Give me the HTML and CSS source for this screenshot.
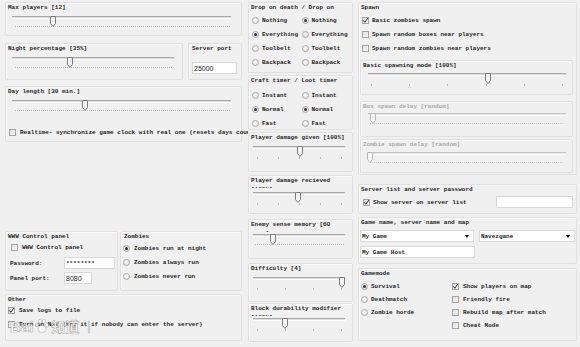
FILE: index.html
```html
<!DOCTYPE html>
<html>
<head>
<meta charset="utf-8">
<link rel="stylesheet" href="styles.css">
</head>
<body>
<div class="app">
  <!-- LEFT COLUMN -->
  <div class="col col-l">
    <div class="gb gb-l gb-max">
      <div class="gt">Max players [12]</div>
      <div class="tb tb-l m2">
        <div class="tb-line"></div>
        <div class="tb-dots"></div>
        <svg class="thumb" style="left:42px" width="6" height="11" viewBox="0 0 6 11"><path d="M0.5 0.5H5.5V7.5L3 10.5L0.5 7.5Z"/></svg>
      </div>
    </div>
    <div class="row-np">
      <div class="gb gb-l gb-night">
        <div class="gt">Night percentage [35%]</div>
        <div class="tb tb-n m3">
          <div class="tb-line"></div>
          <div class="tb-dots"></div>
          <svg class="thumb" style="left:59px" width="6" height="11" viewBox="0 0 6 11"><path d="M0.5 0.5H5.5V7.5L3 10.5L0.5 7.5Z"/></svg>
        </div>
      </div>
      <div class="gb gb-port">
        <div class="gt">Server port</div>
        <div class="inp inp-port">25000</div>
      </div>
    </div>
    <div class="gb gb-l gb-day">
      <div class="gt">Day length [30 min.]</div>
      <div class="tb tb-l m4">
        <div class="tb-line"></div>
        <div class="tb-dots"></div>
        <svg class="thumb" style="left:74px" width="6" height="11" viewBox="0 0 6 11"><path d="M0.5 0.5H5.5V7.5L3 10.5L0.5 7.5Z"/></svg>
      </div>
      <div class="crow crow-rt"><span class="cb"></span><span class="nw">Realtime- synchronize game clock with real one (resets days count)</span></div>
    </div>
    <div class="row-www">
      <div class="gb gb-www">
        <div class="gt">WWW Control panel</div>
        <div class="crow crow-www"><span class="cb"></span>WWW Control panel</div>
        <div class="frow frow-pw"><span class="flabel">Password:</span><div class="inp inp-pw">********</div></div>
        <div class="frow frow-pp"><span class="flabel">Panel port:</span><div class="inp inp-pp">8080</div></div>
      </div>
      <div class="gb gb-zomb">
        <div class="gt">Zombies</div>
        <div class="rrow"><span class="radio on"></span>Zombies run at night</div>
        <div class="rrow"><span class="radio"></span>Zombies always run</div>
        <div class="rrow"><span class="radio"></span>Zombies never run</div>
      </div>
    </div>
    <div class="gb gb-l gb-other">
      <div class="gt">Other</div>
      <div class="crow crow-o1"><span class="cb"><svg viewBox="0 0 7 7" width="7" height="7"><path d="M1.3 3.4L2.9 5.3L5.8 1"/></svg></span>Save logs to file</div>
      <div class="crow crow-o2"><span class="cb"></span><span class="nw">Turn on NAT (try it if nobody can enter the server)</span></div>
    </div>
  </div>

  <!-- MIDDLE COLUMN -->
  <div class="col col-m">
    <div class="gb gb-m gb-drop">
      <div class="gt">Drop on death / Drop on</div>
      <div class="rrow2 first"><span class="ropt"><span class="radio"></span>Nothing</span><span class="ropt"><span class="radio on"></span>Nothing</span></div>
      <div class="rrow2"><span class="ropt"><span class="radio on"></span>Everything</span><span class="ropt"><span class="radio"></span>Everything</span></div>
      <div class="rrow2"><span class="ropt"><span class="radio"></span>Toolbelt</span><span class="ropt"><span class="radio"></span>Toolbelt</span></div>
      <div class="rrow2"><span class="ropt"><span class="radio"></span>Backpack</span><span class="ropt"><span class="radio"></span>Backpack</span></div>
    </div>
    <div class="gb gb-m gb-craft">
      <div class="gt">Craft timer / Loot timer</div>
      <div class="rrow2 first3"><span class="ropt"><span class="radio"></span>Instant</span><span class="ropt"><span class="radio"></span>Instant</span></div>
      <div class="rrow2"><span class="ropt"><span class="radio on"></span>Normal</span><span class="ropt"><span class="radio on"></span>Normal</span></div>
      <div class="rrow2"><span class="ropt"><span class="radio"></span>Fast</span><span class="ropt"><span class="radio"></span>Fast</span></div>
    </div>
    <div class="gb gb-m gb-pdg">
      <div class="gt">Player damage given [100%]</div>
      <div class="tb tb-m m4">
        <div class="tb-line"></div>
        <div class="tb-ticks"><i></i><i></i><i></i><i></i><i></i></div>
        <svg class="thumb" style="left:46px" width="6" height="11" viewBox="0 0 6 11"><path d="M0.5 0.5H5.5V7.5L3 10.5L0.5 7.5Z"/></svg>
      </div>
    </div>
    <div class="gb gb-m gb-pdr">
      <div class="gt gt2">Player damage recieved [100%]</div>
      <div class="tb tb-m m0">
        <div class="tb-line"></div>
        <div class="tb-ticks"><i></i><i></i><i></i><i></i><i></i></div>
        <svg class="thumb" style="left:44px" width="6" height="11" viewBox="0 0 6 11"><path d="M0.5 0.5H5.5V7.5L3 10.5L0.5 7.5Z"/></svg>
      </div>
    </div>
    <div class="gb gb-m gb-esm">
      <div class="gt gt2">Enemy sense memory [60 sec.]</div>
      <div class="tb tb-m mn2">
        <div class="tb-line"></div>
        <div class="tb-dots"></div>
        <svg class="thumb" style="left:19px" width="6" height="11" viewBox="0 0 6 11"><path d="M0.5 0.5H5.5V7.5L3 10.5L0.5 7.5Z"/></svg>
      </div>
    </div>
    <div class="gb gb-m gb-diff">
      <div class="gt">Difficulty [4]</div>
      <div class="tb tb-m m2">
        <div class="tb-line"></div>
        <div class="tb-ticks"><i></i><i></i><i></i><i></i></div>
        <svg class="thumb" style="left:88px" width="6" height="11" viewBox="0 0 6 11"><path d="M0.5 0.5H5.5V7.5L3 10.5L0.5 7.5Z"/></svg>
      </div>
    </div>
    <div class="gb gb-m gb-block">
      <div class="gt gt2">Block durability modifier [100%]</div>
      <div class="tb tb-m mn2">
        <div class="tb-line"></div>
        <div class="tb-ticks"><i></i><i></i><i></i><i></i></div>
        <svg class="thumb" style="left:31px" width="6" height="11" viewBox="0 0 6 11"><path d="M0.5 0.5H5.5V7.5L3 10.5L0.5 7.5Z"/></svg>
      </div>
    </div>
  </div>

  <!-- RIGHT COLUMN -->
  <div class="col col-r">
    <div class="gb gb-r gb-spawn">
      <div class="gt gt-r">Spawn</div>
      <div class="crow2 first"><span class="cb"><svg viewBox="0 0 7 7" width="7" height="7"><path d="M1.3 3.4L2.9 5.3L5.8 1"/></svg></span>Basic zombies spawn</div>
      <div class="crow2"><span class="cb"></span>Spawn random boxes near players</div>
      <div class="crow2"><span class="cb"></span>Spawn random zombies near players</div>
      <div class="gb gb-in gb-basic">
        <div class="gt">Basic spawning mode [100%]</div>
        <div class="tb tb-r mn1">
          <div class="tb-line"></div>
          <div class="tb-ticks"><i></i><i></i><i></i><i></i><i></i><i></i></div>
          <svg class="thumb" style="left:122px" width="6" height="11" viewBox="0 0 6 11"><path d="M0.5 0.5H5.5V7.5L3 10.5L0.5 7.5Z"/></svg>
        </div>
      </div>
      <div class="gb gb-in gb-boxd dis">
        <div class="gt">Box spawn delay [random]</div>
        <div class="tb tb-r mn2">
          <div class="tb-line"></div>
          <div class="tb-dots"></div>
          <svg class="thumb" style="left:7px" width="6" height="11" viewBox="0 0 6 11"><path d="M0.5 0.5H5.5V7.5L3 10.5L0.5 7.5Z"/></svg>
        </div>
      </div>
      <div class="gb gb-in gb-zd dis">
        <div class="gt">Zombie spawn delay [random]</div>
        <div class="tb tb-r mn1">
          <div class="tb-line"></div>
          <div class="tb-dots"></div>
          <svg class="thumb" style="left:4px" width="6" height="11" viewBox="0 0 6 11"><path d="M0.5 0.5H5.5V7.5L3 10.5L0.5 7.5Z"/></svg>
        </div>
      </div>
    </div>
    <div class="gb gb-r gb-slist">
      <div class="gt gt-r">Server list and server password</div>
      <div class="srow">
        <div class="crow3"><span class="cb"><svg viewBox="0 0 7 7" width="7" height="7"><path d="M1.3 3.4L2.9 5.3L5.8 1"/></svg></span>Show server on server list</div>
        <div class="inp inp-spw"></div>
      </div>
    </div>
    <div class="gb gb-r gb-game">
      <div class="gt gt-r">Game name, server name and map</div>
      <div class="combos">
        <div class="combo combo1">My Game<span class="arrow"></span></div>
        <div class="combo combo2">Navezgane<span class="arrow"></span></div>
      </div>
      <div class="inp inp-host">My Game Host</div>
    </div>
    <div class="gb gb-r gb-mode">
      <div class="gt gt-r">Gamemode</div>
      <div class="modes">
        <div class="mcol mcol1">
          <div class="mrow"><span class="radio on"></span>Survival</div>
          <div class="mrow"><span class="radio"></span>Deathmatch</div>
          <div class="mrow"><span class="radio"></span>Zombie horde</div>
        </div>
        <div class="mcol mcol2">
          <div class="mrow"><span class="cb"><svg viewBox="0 0 7 7" width="7" height="7"><path d="M1.3 3.4L2.9 5.3L5.8 1"/></svg></span>Show players on map</div>
          <div class="mrow"><span class="cb"></span>Friendly fire</div>
          <div class="mrow"><span class="cb"></span>Rebuild map after match</div>
          <div class="mrow"><span class="cb"></span>Cheat Mode</div>
        </div>
      </div>
    </div>
  </div>

  <div class="watermark"><span class="wm-bai">Bai</span><svg class="wm-paw" width="16" height="16" viewBox="0 0 16 16"><ellipse cx="8" cy="11" rx="4" ry="3.5"/><ellipse cx="3" cy="7" rx="1.6" ry="2"/><ellipse cx="6" cy="3.5" rx="1.6" ry="2.2"/><ellipse cx="10" cy="3.5" rx="1.6" ry="2.2"/><ellipse cx="13" cy="7" rx="1.6" ry="2"/></svg><span class="wm-zd">知道</span><span class="wm-bar">|</span></div>
</div>
</body>
</html>
```

FILE: styles.css
```css
html, body {
  margin: 0;
  padding: 0;
}
body {
  background: #f0f0f0;
  font-family: "Liberation Mono", "DejaVu Sans Mono", monospace;
  font-size: 6px;
  font-weight: bold;
  color: #1e1e1e;
}
.app {
  position: relative;
  display: flex;
  width: 580px;
  height: 347px;
  overflow: hidden;
}
.col {
  display: flex;
  flex-direction: column;
  overflow: hidden;
  flex: none;
}
.col-l { width: 248px; }
.col-m { width: 108px; }
.col-r { width: 224px; }

.gb {
  box-sizing: border-box;
  border: 1px solid #e0e0e0;
  border-radius: 2px;
  box-shadow: inset 1px 1px 0 #f8f8f8;
  padding: 0 2px;
  flex: none;
}
.gt {
  height: 9px;
  line-height: 9px;
  white-space: nowrap;
}
.gt2 {
  height: 12px;
  width: 92px;
  overflow: hidden;
  white-space: normal;
}
.nw { white-space: nowrap; }
.dis { color: #a9a9a9; }

/* trackbar */
.tb {
  position: relative;
  height: 17px;
  flex: none;
}
.tb-line {
  box-sizing: border-box;
  height: 3px;
  margin-top: 4px;
  border-top: 1px solid #a9a9a9;
  border-bottom: 1px solid #ffffff;
  background: #dedede;
}
.tb-dots {
  height: 1px;
  margin-top: 7px;
  background: repeating-linear-gradient(90deg, #b8b8b8 0 1px, transparent 1px 2px);
}
.tb-ticks {
  display: flex;
  justify-content: space-between;
  margin-top: 8px;
  height: 2px;
}
.tb-ticks i {
  display: block;
  width: 1px;
  height: 2px;
  background: #b8b8b8;
}
.thumb {
  position: absolute;
  top: 0;
}
.thumb path {
  fill: #f3f3f3;
  stroke: #7c7c7c;
  stroke-width: 1;
}
.dis .thumb path { stroke: #b9b9b9; fill: #f6f6f6; }
.dis .tb-line { border-top-color: #c4c4c4; background: #e6e6e6; }
.dis .tb-dots { background: repeating-linear-gradient(90deg, #c8c8c8 0 1px, transparent 1px 2px); }

.m0 { margin-top: 0; }
.m2 { margin-top: 2px; }
.m3 { margin-top: 3px; }
.m4 { margin-top: 4px; }
.mn1 { margin-top: -1px; }
.mn2 { margin-top: -2px; }

.tb-l .tb-line { margin-left: 4px; margin-right: 8px; }
.tb-l .tb-dots { margin-left: 7px; margin-right: 9px; }
.tb-n .tb-line { margin-left: 4px; margin-right: 6px; }
.tb-n .tb-dots { margin-left: 7px; margin-right: 8px; }
.tb-m .tb-line { margin-left: 2px; margin-right: 5px; }
.tb-m .tb-dots { margin-left: 4px; margin-right: 6px; }
.tb-m .tb-ticks { margin-left: 6px; margin-right: 8px; }
.tb-r .tb-line { margin-left: 5px; margin-right: 4px; }
.tb-r .tb-dots { margin-left: 7px; margin-right: 6px; }
.tb-r .tb-ticks { margin-left: 8px; margin-right: 7px; }

/* radio & checkbox */
.radio {
  position: relative;
  box-sizing: border-box;
  width: 7px;
  height: 7px;
  border-radius: 50%;
  border: 1px solid #aaaaaa;
  background: radial-gradient(circle at 40% 40%, #ffffff, #d6d6d6);
  margin-right: 3px;
  flex: none;
}
.radio.on::after {
  content: "";
  position: absolute;
  left: 1px;
  top: 1px;
  width: 3px;
  height: 3px;
  border-radius: 50%;
  background: #27324a;
}
.cb {
  box-sizing: border-box;
  display: block;
  width: 7px;
  height: 7px;
  border: 1px solid #a3a3a3;
  background: linear-gradient(135deg, #dedede, #fafafa);
  margin-right: 4px;
  flex: none;
  position: relative;
}
.cb svg {
  position: absolute;
  left: -1px;
  top: -1px;
}
.cb svg path {
  fill: none;
  stroke: #2a2f3a;
  stroke-width: 1;
}

/* inputs */
.inp {
  box-sizing: border-box;
  height: 12px;
  line-height: 11px;
  background: #ffffff;
  border: 1px solid #d8d8d8;
  padding-left: 1px;
  white-space: nowrap;
  overflow: hidden;
}

/* LEFT */
.gb-l { margin-left: 5px; }
.gb-max { margin-top: 2px; width: 237px; height: 34px; }
.row-np { display: flex; margin-top: 7px; height: 37px; flex: none; }
.gb-night { width: 178px; height: 37px; }
.gb-port { margin-left: 5px; width: 54px; height: 37px; padding-left: 3px; }
.inp-port {
  margin-top: 9px;
  width: 45px;
  font-family: "Liberation Sans", Arial, sans-serif;
  font-weight: normal;
  font-size: 7px;
  color: #222;
}
.gb-day { margin-top: 6px; width: 237px; height: 56px; }
.crow { display: flex; align-items: center; height: 12px; }
.crow-rt { margin-top: 9px; margin-left: 1px; }
.row-www { display: flex; margin-top: 89px; margin-left: 5px; height: 60px; flex: none; }
.gb-www { width: 113px; height: 60px; }
.crow-www { margin-top: 1px; height: 10px; margin-left: 3px; }
.frow { display: flex; align-items: center; }
.flabel { width: 54px; margin-left: 2px; flex: none; }
.frow-pw { margin-top: 5px; }
.frow-pp { margin-top: 3px; }
.inp-pw { width: 51px; letter-spacing: 0; }
.inp-pp {
  width: 28px;
  font-family: "Liberation Sans", Arial, sans-serif;
  font-weight: normal;
  font-size: 7px;
  color: #222;
}
.gb-zomb { margin-left: 2px; width: 122px; height: 60px; padding-left: 2px; }
.gb-zomb .gt { margin-left: 1px; }
.rrow { display: flex; align-items: center; height: 14px; }
.rrow .radio { margin-right: 4px; }
.gb-other { margin-top: 3px; width: 237px; height: 47px; }
.crow-o1 { margin-left: 0; }
.crow-o2 { margin-top: 2px; }

/* MIDDLE */
.gb-m { width: 105px; }
.rrow2 { display: flex; height: 14px; align-items: center; }
.rrow2.first { margin-top: 1px; }
.rrow2.first3 { margin-top: 3px; }
.ropt { display: flex; align-items: center; width: 50px; padding-left: 1px; box-sizing: border-box; }
.gb-drop { margin-top: 2px; height: 71px; }
.gb-craft { margin-top: 2px; height: 55px; }
.gb-pdg { margin-top: 2px; height: 40px; }
.gb-pdr { margin-top: 3px; height: 39px; }
.gb-esm { margin-top: 5px; height: 40px; }
.gb-diff { margin-top: 4px; height: 39px; }
.gb-block { margin-top: 1px; height: 39px; }

/* RIGHT */
.gb-r { margin-left: 2px; width: 219px; padding: 0 1px; }
.gt-r { margin-left: 1px; }
.gb-spawn { margin-top: 2px; height: 173px; }
.crow2 { display: flex; align-items: center; height: 14px; padding-left: 2px; }
.crow2 .cb { margin-right: 3px; }
.crow2.first { margin-top: 1px; }
.gb-in { width: 213px; padding: 0 2px; }
.gb-basic { margin-top: 5px; height: 35px; }
.gb-boxd { margin-top: 6px; height: 36px; }
.gb-zd { margin-top: 2px; height: 34px; }
.gb-slist { margin-top: 9px; height: 30px; }
.srow { display: flex; align-items: center; justify-content: space-between; margin-top: 2px; height: 12px; }
.crow3 { display: flex; align-items: center; padding-left: 3px; }
.crow3 .cb { margin-right: 3px; }
.inp-spw { width: 77px; margin-right: 2px; }
.gb-game { margin-top: 3px; height: 47px; }
.combos { display: flex; margin-top: 3px; }
.combo {
  position: relative;
  box-sizing: border-box;
  height: 12px;
  line-height: 11px;
  background: #ffffff;
  border: 1px solid #dadada;
  padding-left: 1px;
}
.combo1 { width: 115px; }
.combo2 { width: 97px; margin-left: 5px; }
.arrow {
  position: absolute;
  right: 4px;
  top: 4px;
  width: 0;
  height: 0;
  border-left: 2.5px solid transparent;
  border-right: 2.5px solid transparent;
  border-top: 3px solid #111;
}
.inp-host { margin-top: 4px; width: 115px; border-color: #dadada; }
.gb-mode { margin-top: 4px; height: 73px; }
.modes { display: flex; margin-top: 2px; }
.mcol1 { width: 91px; padding-left: 1px; }
.mrow { display: flex; align-items: center; height: 13px; }
.mcol1 .radio { margin-right: 3px; }
.mcol2 .cb { margin-right: 4px; }

/* watermark overlay */
.watermark {
  position: absolute;
  left: 10px;
  top: 316px;
  display: flex;
  align-items: center;
  font-family: "Liberation Sans", "Noto Sans CJK SC", sans-serif;
  font-weight: bold;
  font-size: 15px;
  color: rgba(255, 255, 255, 0.8);
  -webkit-text-stroke: 0.6px rgba(110, 110, 110, 0.55);
  pointer-events: none;
}
.wm-paw { margin: 0 1px; }
.wm-paw ellipse { fill: rgba(255, 255, 255, 0.8); stroke: rgba(110, 110, 110, 0.55); stroke-width: 0.6; }
.wm-zd { font-family: "Noto Sans CJK SC", sans-serif; font-size: 14px; }
.wm-bar { margin-left: 8px; font-weight: normal; font-size: 12px; }
```
